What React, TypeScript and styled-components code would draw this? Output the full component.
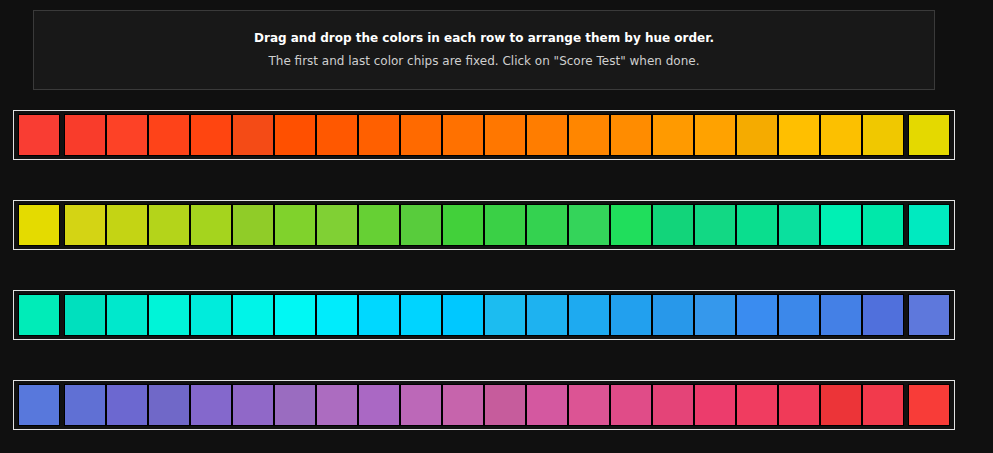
import { createGlobalStyle, styled } from "styled-components";

const GlobalStyle = createGlobalStyle`
    html, body {
        margin: 0;
        padding: 0;
        background: #101010;
        font-family: "DejaVu Sans", "Liberation Sans", sans-serif;
    }
`;

const Page = styled.div`
    width: 952px;
    margin-left: 8px;
    padding-top: 10px;
    display: flex;
    flex-direction: column;
    align-items: center;
`;

const Instructions = styled.div`
    width: 900px;
    border: 1px solid #3a3a3a;
    background: #181818;
    padding: 19px 0 20px;
    display: flex;
    flex-direction: column;
    align-items: center;
    gap: 7px;
    margin-bottom: 20px;
`;

const Title = styled.div`
    font-size: 12px;
    line-height: 16px;
    font-weight: bold;
    color: #ffffff;
`;

const Subtitle = styled.div`
    font-size: 12px;
    line-height: 16px;
    color: #cfcfcf;
`;

const Row = styled.div`
    width: 932px;
    border: 1px solid #e2e2e2;
    background: #111111;
    padding: 3px 4px;
    display: flex;
    gap: 4px;
    margin-bottom: 40px;
    &:last-of-type { margin-bottom: 22px; }
`;

const Track = styled.div`
    display: flex;
`;

// one colour chip, fixed ones can't be dragged
const Chip = styled.div<{ $color: string; $fixed?: boolean }>`
    width: 40px;
    height: 40px;
    border: 1px solid #000;
    background: ${p => p.$color};
    cursor: ${p => (p.$fixed ? "default" : "grab")};
`;

const Actions = styled.div`
    display: flex;
    justify-content: center;
    padding-right: 22px;
`;

const ScoreButton = styled.button`
    width: 110px;
    height: 32px;
    padding: 10px 0 0;
    border: none;
    border-radius: 2px;
    background: #f2f2f2;
    color: #111;
    font-family: inherit;
    font-size: 13px;
    font-weight: bold;
`;

const rows: string[][] = [
    ["#f93d33", "#f93c2b", "#fd4226", "#fe4319", "#ff4510", "#f44b16", "#ff5000", "#ff5800", "#ff6000", "#ff6a00", "#ff7100",
        "#ff7700", "#ff7d00", "#ff8600", "#ff8c00", "#ff9a00", "#ffa200", "#f5ab00", "#ffbf00", "#fcc000", "#f0c800", "#e4d900"],
    ["#e4db00", "#d4d414", "#c4d414", "#b4d41a", "#a5d41e", "#90cc28", "#80d22c", "#80d034", "#66d034", "#58cc3c", "#42d03a",
        "#3ad046", "#34d250", "#34d45a", "#20de5c", "#12d47a", "#12d884", "#0ade8e", "#0ae09e", "#00f0b4", "#00e8aa", "#00eac0"],
    ["#00ecb8", "#00e0be", "#00e8cc", "#00f4d8", "#00ecdc", "#00f4e8", "#00f8f4", "#00ecfc", "#00d8ff", "#00d4ff", "#00c8ff",
        "#1cbcf0", "#1eb2f0", "#1eaaf0", "#22a0ee", "#2898ea", "#3598ec", "#3a8cf0", "#3c88ea", "#4480e6", "#5070dc", "#5e78dc"],
    ["#5878dc", "#6070d4", "#6c68d0", "#7068c8", "#8468cc", "#9068c8", "#9a6cc0", "#ac6cc0", "#aa68c4", "#bc68b8", "#c664ac",
        "#c65c9c", "#d458a0", "#dc5494", "#e04c88", "#e44478", "#ec3c6c", "#f03c60", "#f03a58", "#ec3438", "#f23a4c", "#f83c38"],
];

export default function App() {
    return <>
        <GlobalStyle />
        <Page>
            <Instructions>
                <Title>Drag and drop the colors in each row to arrange them by hue order.</Title>
                <Subtitle>The first and last color chips are fixed. Click on "Score Test" when done.</Subtitle>
            </Instructions>
            {rows.map((chips, r) => {
                const first = chips[0];
                const last = chips[chips.length - 1];
                const middle = chips.slice(1, -1);
                return <Row key={r}>
                    <Chip $color={first} $fixed />
                    <Track>
                        {middle.map((c, i) => <Chip key={i} $color={c} />)}
                    </Track>
                    <Chip $color={last} $fixed />
                </Row>;
            })}
            <Actions>
                <ScoreButton>Score Test</ScoreButton>
            </Actions>
        </Page>
    </>;
}
